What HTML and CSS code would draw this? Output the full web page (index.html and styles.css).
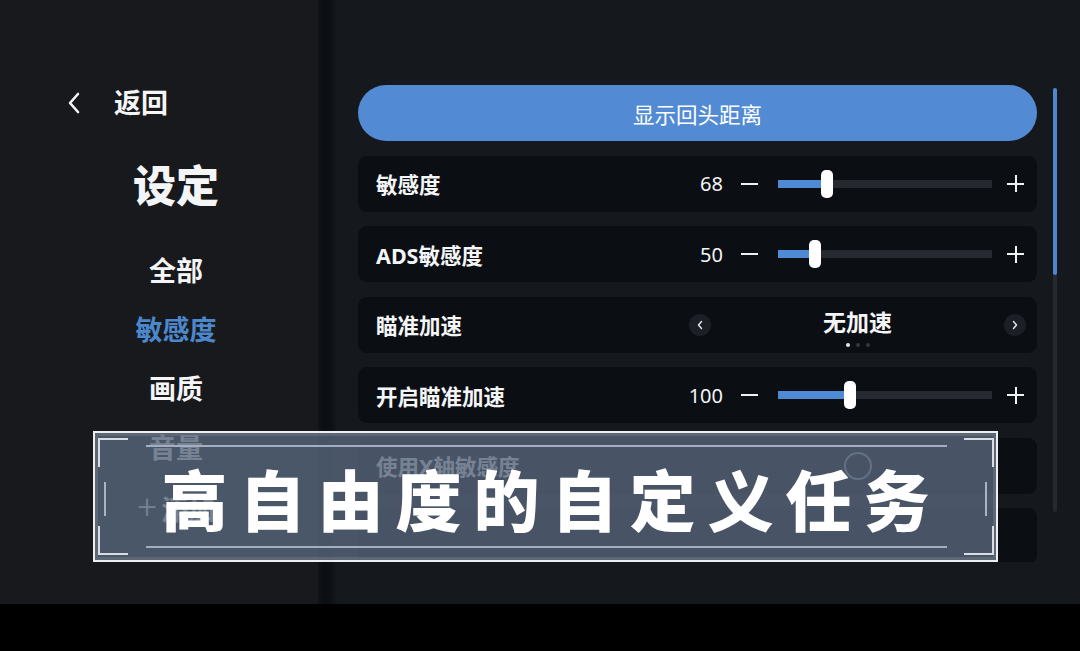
FILE: index.html
```html
<!DOCTYPE html>
<html lang="zh-CN">
<head>
  <meta charset="UTF-8">
  <meta name="viewport" content="width=device-width, initial-scale=1.0">
  <title>设定 - 敏感度</title>
  <link rel="stylesheet" href="styles.css">
</head>
<body>

<div class="screen">
  <!-- Left menu -->
  <aside class="sidebar">
    <div class="back">
      <svg width="16" height="24" viewBox="0 0 16 24"><path d="M12 3 L4 12 L12 21" fill="none" stroke="#f4f5f6" stroke-width="2.6" stroke-linecap="round" stroke-linejoin="round"/></svg>
      <span>返回</span>
    </div>
    <h1 class="title">设定</h1>
    <ul class="menu">
      <li>全部</li>
      <li class="active">敏感度</li>
      <li>画质</li>
      <li>音量</li>
      <li class="add"><span class="add-icon">+</span>添加</li>
    </ul>
  </aside>

  <!-- Settings list -->
  <main class="content">
    <div class="list">
      <button class="pill">显示回头距离</button>

      <div class="row">
        <span class="label">敏感度</span>
        <div class="slider-ctl">
          <span class="value">68</span>
          <span class="minus"></span>
          <div class="track"><div class="fill" style="width:23%"><span class="thumb"></span></div></div>
          <span class="plus"></span>
        </div>
      </div>

      <div class="row">
        <span class="label">ADS敏感度</span>
        <div class="slider-ctl">
          <span class="value">50</span>
          <span class="minus"></span>
          <div class="track"><div class="fill" style="width:17.5%"><span class="thumb"></span></div></div>
          <span class="plus"></span>
        </div>
      </div>

      <div class="row">
        <span class="label">瞄准加速</span>
        <div class="choice">
          <span class="arrow">
            <svg width="8" height="10" viewBox="0 0 8 10"><path d="M5.5 1.5 L2.5 5 L5.5 8.5" fill="none" stroke="#e8eaec" stroke-width="1.4" stroke-linecap="round" stroke-linejoin="round"/></svg>
          </span>
          <div class="choice-mid">
            <span class="choice-text">无加速</span>
            <div class="dots"><i class="on"></i><i></i><i></i></div>
          </div>
          <span class="arrow">
            <svg width="8" height="10" viewBox="0 0 8 10"><path d="M2.5 1.5 L5.5 5 L2.5 8.5" fill="none" stroke="#e8eaec" stroke-width="1.4" stroke-linecap="round" stroke-linejoin="round"/></svg>
          </span>
        </div>
      </div>

      <div class="row">
        <span class="label">开启瞄准加速</span>
        <div class="slider-ctl">
          <span class="value">100</span>
          <span class="minus"></span>
          <div class="track"><div class="fill" style="width:33.5%"><span class="thumb"></span></div></div>
          <span class="plus"></span>
        </div>
      </div>

      <div class="row">
        <span class="label">使用X轴敏感度</span>
        <div class="choice center">
          <span class="ring"></span>
        </div>
      </div>

      <div class="row"></div>
    </div>

    <div class="scrollbar"><div class="scroll-thumb"></div></div>
  </main>
</div>

<div class="bottom-bar"></div>

<!-- Caption banner -->
<div class="banner">
  <span class="corner tl"></span>
  <span class="corner bl"></span>
  <span class="corner tr"></span>
  <span class="corner br"></span>
  <span class="tick left"></span>
  <span class="tick right"></span>
  <span class="rule top"></span>
  <span class="rule bottom"></span>
  <p class="banner-text">高自由度的自定义任务</p>
</div>

</body>
</html>
```

FILE: styles.css
```css
* { box-sizing: border-box; }

body, html {
  margin: 0;
  padding: 0;
  width: 1080px;
  height: 651px;
  overflow: hidden;
  background: #000;
  color: #f4f5f6;
  font-family: "Noto Sans", "Noto Sans CJK SC", sans-serif;
}

.screen {
  display: flex;
  height: 604px;
}

/* Left menu */
.sidebar {
  width: 318px;
  background: #17191c;
  display: flex;
  flex-direction: column;
  align-items: center;
  padding: 88px 0 0 34px;
}

.back {
  align-self: flex-start;
  margin-left: 32px;
  display: flex;
  align-items: center;
  height: 30px;
}

.back svg {
  margin-right: 32px;
}

.back span {
  font-size: 27px;
  font-weight: 700;
  line-height: 30px;
}

.title {
  margin: 43px 0 0;
  font-size: 43px;
  font-weight: 900;
  line-height: 50px;
}

.menu {
  list-style: none;
  margin: 30px 0 0;
  padding: 0;
  text-align: center;
}

.menu li {
  font-size: 27px;
  font-weight: 700;
  line-height: 59px;
  height: 59px;
}

.menu li.active {
  color: #4c87cc;
}

.add-icon {
  font-weight: 300;
  font-size: 36px;
  margin-right: 4px;
}

/* Right content */
.content {
  flex: 1;
  display: flex;
  padding: 85px 0 0 40px;
  background: linear-gradient(90deg, #101317 0, #0b0e12 6px, #0d1015 13px, #15181c 19px);
}

.list {
  width: 679px;
  height: 477px;
  overflow: hidden;
  display: flex;
  flex-direction: column;
  gap: 14.5px;
}

.pill {
  flex: none;
  height: 56px;
  border: none;
  border-radius: 28px;
  background: #528bd4;
  color: #fff;
  font-family: "Noto Sans CJK SC", sans-serif;
  font-size: 21.5px;
  font-weight: 400;
  cursor: pointer;
}

.row {
  flex: none;
  height: 56px;
  border-radius: 9px;
  background: #0b0e13;
  display: flex;
  align-items: center;
  padding-left: 18px;
}

.label {
  flex: 1;
  font-size: 21.5px;
  font-weight: 700;
}

/* Slider rows */
.slider-ctl {
  display: flex;
  align-items: center;
  padding-right: 13px;
}

.value {
  font-size: 20px;
  min-width: 40px;
  text-align: right;
  margin-right: 18px;
}

.minus, .plus {
  position: relative;
  width: 17px;
  height: 17px;
}

.minus::before, .plus::before, .plus::after {
  content: "";
  position: absolute;
  background: #eef0f2;
}

.minus::before, .plus::before {
  left: 0;
  top: 7.5px;
  width: 17px;
  height: 2px;
}

.plus::after {
  left: 7.5px;
  top: 0;
  width: 2px;
  height: 17px;
}

.track {
  width: 214px;
  height: 8px;
  margin: 0 15px 0 20px;
  background: #26292f;
}

.fill {
  position: relative;
  height: 100%;
  background: #4f8ad4;
}

.thumb {
  position: absolute;
  right: -6px;
  top: -10px;
  width: 12px;
  height: 28px;
  border-radius: 5px;
  background: #fff;
}

/* Option picker */
.choice {
  width: 348px;
  display: flex;
  align-items: center;
  padding-right: 11px;
}

.choice.center {
  justify-content: center;
}

.arrow {
  width: 22px;
  height: 22px;
  border-radius: 50%;
  background: #1c1f25;
  display: flex;
  align-items: center;
  justify-content: center;
}

.choice-mid {
  flex: 1;
  display: flex;
  flex-direction: column;
  align-items: center;
  padding-top: 6px;
}

.choice-text {
  font-size: 23px;
  font-weight: 700;
  line-height: 26px;
}

.dots {
  display: flex;
  gap: 6px;
  margin-top: 8px;
}

.dots i {
  width: 4px;
  height: 4px;
  border-radius: 50%;
  background: #343840;
}

.dots i.on {
  background: #e6e8eb;
}

.ring {
  width: 28px;
  height: 28px;
  border-radius: 50%;
  border: 2px solid #8d99aa;
}

/* Scrollbar */
.scrollbar {
  width: 4px;
  height: 424px;
  margin: 3px 0 0 16px;
  border-radius: 2px;
  background: #262a30;
}

.scroll-thumb {
  height: 187px;
  border-radius: 2px;
  background: #4f86cc;
}

.bottom-bar {
  height: 47px;
  background: #000;
}

/* Caption banner laid over the screen */
.banner {
  position: absolute;
  left: 93px;
  top: 431px;
  width: 905px;
  height: 131px;
  border: 2px solid #eceef1;
  background: rgba(88, 103, 124, 0.8);
  box-shadow: inset 0 0 0 3px rgba(120, 124, 130, 0.45);
  display: flex;
  align-items: center;
  justify-content: center;
}

.banner-text {
  margin: 0;
  padding-left: 12px;
  font-family: "Noto Sans CJK SC", sans-serif;
  font-size: 66px;
  font-weight: 900;
  letter-spacing: 12px;
  line-height: 1;
  color: #fff;
}

.corner {
  position: absolute;
  width: 30px;
  height: 29px;
  border: 0 solid #d9dde3;
}

.corner.tl { left: 3px; top: 5px; border-top-width: 2px; border-left-width: 2px; }
.corner.bl { left: 3px; bottom: 5px; border-bottom-width: 2px; border-left-width: 2px; }
.corner.tr { right: 2px; top: 5px; border-top-width: 2px; border-right-width: 2px; }
.corner.br { right: 2px; bottom: 5px; border-bottom-width: 2px; border-right-width: 2px; }

.tick {
  position: absolute;
  top: 49px;
  width: 2px;
  height: 34px;
  background: #aab5c4;
}

.tick.left { left: 9px; }
.tick.right { right: 9px; }

.rule {
  position: absolute;
  left: 51px;
  right: 49px;
  height: 2px;
  background: #a3afbf;
}

.rule.top { top: 12px; }
.rule.bottom { bottom: 12px; }
```
